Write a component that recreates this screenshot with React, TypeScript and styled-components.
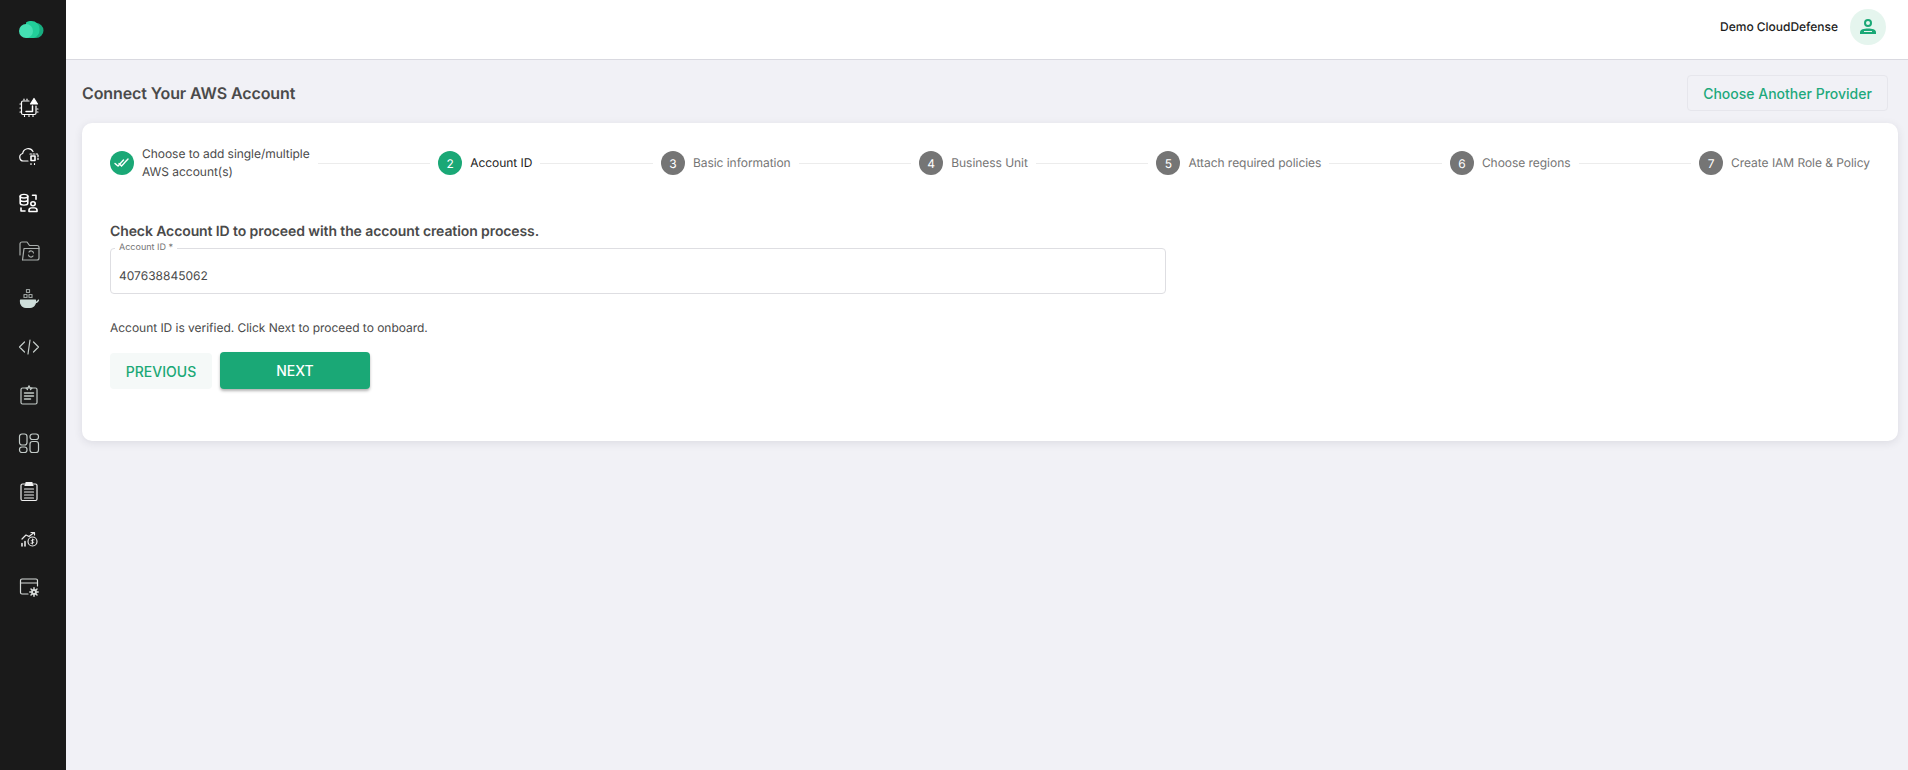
import React from 'react'
import styled, { createGlobalStyle } from 'styled-components'

const GlobalStyle = createGlobalStyle`
  html, body {
    margin: 0;
    padding: 0;
    height: 100%;
    background: #f1f1f6;
    font-family: Inter, "Liberation Sans", sans-serif;
    text-rendering: geometricPrecision;
  }
  * { box-sizing: border-box; }
`

const Page = styled.div`
  display: flex;
  width: 1908px;
  height: 770px;
  overflow: hidden;
`

const Sidebar = styled.aside`
  width: 66px;
  flex: none;
  background: #1a1a1a;
  display: flex;
  flex-direction: column;
  align-items: center;
  padding-right: 9px;
`

const Logo = styled.div`
  height: 59px;
  width: 100%;
  padding-left: 4px;
  display: flex;
  align-items: center;
  justify-content: center;
  margin-bottom: 24px;
`

const NavItem = styled.div<{ $tone: string }>`
  height: 48px;
  width: 100%;
  display: flex;
  align-items: center;
  justify-content: center;
  color: ${({ $tone }) => $tone};
`

const Main = styled.main`
  flex: 1;
  min-width: 0;
  display: flex;
  flex-direction: column;
`

const Header = styled.header`
  height: 60px;
  flex: none;
  background: #fff;
  border-bottom: 1px solid #d9d9e0;
  display: flex;
  align-items: center;
  justify-content: flex-end;
  padding: 0 22px 6px 0;
  gap: 12px;
`

const UserName = styled.span`
  font-size: 12px;
  font-weight: 500;
  letter-spacing: -0.02px;
  color: #1c1c1c;
`

const Avatar = styled.div`
  width: 36px;
  height: 36px;
  border-radius: 50%;
  background: #e5f5ee;
  display: flex;
  align-items: center;
  justify-content: center;
`

const Content = styled.div`
  padding: 15px 10px 0 16px;
`

const TitleRow = styled.div`
  display: flex;
  align-items: center;
  justify-content: space-between;
  height: 36px;
  padding-right: 10px;
  margin-bottom: 12px;
`

const Title = styled.h1`
  margin: 0;
  font-size: 16px;
  font-weight: 600;
  letter-spacing: -0.1px;
  color: #4a4a4a;
`

const ProviderButton = styled.button`
  height: 36px;
  width: 201px;
  border: 1px solid #e6e6ec;
  border-radius: 4px;
  background: transparent;
  color: #1ea97c;
  font: 500 14px Inter, sans-serif;
`

const Card = styled.section`
  height: 318px;
  background: #fff;
  border-radius: 10px;
  padding: 20px 28px 0;
  box-shadow: 0 2px 8px rgba(40, 40, 60, 0.1);
`

const Stepper = styled.div`
  display: flex;
  align-items: center;
  height: 40px;
`

const Step = styled.div`
  display: flex;
  align-items: center;
  gap: 8px;
  flex: none;
`

const StepCircle = styled.div<{ $active?: boolean }>`
  width: 24px;
  height: 24px;
  border-radius: 50%;
  flex: none;
  background: ${({ $active }) => ($active ? '#1aa876' : '#757575')};
  color: #fff;
  font-size: 12px;
  display: flex;
  align-items: center;
  justify-content: center;
`

const StepLabel = styled.span<{ $state: 'done' | 'active' | 'idle' }>`
  font-size: 12px;
  line-height: 18px;
  letter-spacing: -0.04px;
  color: ${({ $state }) =>
    $state === 'active' ? '#1c1c1c' : $state === 'done' ? '#4a4a4a' : '#757575'};
  font-weight: 400;
`

const Connector = styled.div`
  flex: 1;
  height: 1px;
  background: #ececec;
  margin: 0 8px;
`

const Heading = styled.h2`
  margin: 39px 0 0;
  font-size: 14px;
  line-height: 20px;
  font-weight: 600;
  letter-spacing: -0.1px;
  color: #4a4a4a;
`

const Field = styled.fieldset`
  margin: 1px 0 0;
  padding: 0 8px;
  width: 1056px;
  height: 51px;
  border: 1px solid #dedee2;
  border-radius: 4px;
`

const FieldLegend = styled.legend`
  font-size: 9px;
  line-height: 10px;
  color: #757575;
  padding: 0 4px;
  margin-left: -4px;
`

const FieldValue = styled.div`
  font-size: 12px;
  line-height: 20px;
  color: #4a4a4a;
  padding-top: 13px;
`

const Hint = styled.p`
  margin: 24px 0 0;
  font-size: 12px;
  line-height: 20px;
  letter-spacing: -0.03px;
  color: #4a4a4a;
`

const Actions = styled.div`
  display: flex;
  gap: 8px;
  margin-top: 14px;
`

const GhostButton = styled.button`
  width: 102px;
  height: 36px;
  margin-top: 1px;
  border: none;
  border-radius: 4px;
  background: #f5f9f8;
  color: #1aa876;
  font: 500 14px Inter, sans-serif;
`

const PrimaryButton = styled.button`
  width: 150px;
  height: 37px;
  border: none;
  border-radius: 4px;
  background: #1aa876;
  color: #fff;
  font: 500 14px Inter, sans-serif;
  box-shadow: 0 2px 3px rgba(0, 0, 0, 0.3);
`

const Icon: React.FC<{ children: React.ReactNode }> = ({ children }) => (
  <svg width="22" height="22" viewBox="0 0 22 22" fill="none" stroke="currentColor" strokeWidth="1.2" strokeLinecap="round" strokeLinejoin="round">
    {children}
  </svg>
)

const navIcons: { tone: string; icon: React.ReactNode }[] = [
  {
    tone: '#ffffff',
    icon: (
      <Icon>
        <path d="M11 5H5a1.500 1.500 0 0 0-1.500 1.500V17A1.500 1.500 0 0 0 5 18.500h11.500A1.500 1.500 0 0 0 18 17V10" />
        <path d="M6 3v1M9 3v1M2 8h1M2 12h1M2 16h1M6.500 19.500v1M11 19.500v1M15 19.500v1M19 13h1M19 16h1" />
        <path d="M14.500 10v5.500H8" strokeWidth="1.500" />
        <path d="M12.500 8l3.500-5.500L19.500 8z" fill="currentColor" />
      </Icon>
    ),
  },
  {
    tone: '#ffffff',
    icon: (
      <Icon>
        <path d="M10 17H5.500a3.800 3.800 0 0 1-.8-7.500A5.500 5.500 0 0 1 15 7.500" />
        <rect x="13" y="12" width="4" height="4.500" strokeWidth="1.600" />
        <path d="M12 10h8v7M13 19.500v1M16.500 19.500v1" strokeDasharray="1.500 1.500" />
      </Icon>
    ),
  },
  {
    tone: '#ffffff',
    icon: (
      <Icon>
        <g transform="translate(0 1) scale(1 .9)">
          <ellipse cx="6" cy="3.500" rx="3.800" ry="2" strokeWidth="1.600" />
          <path d="M2.200 3.500v8c0 1.100 1.700 2 3.800 2s3.800-.9 3.800-2v-8M2.200 7.500c0 1.100 1.700 2 3.800 2s3.800-.9 3.800-2" strokeWidth="1.600" />
          <path d="M14.500 2.500h3.500V7M3 16.500v3.500h4" strokeWidth="1.600" />
          <circle cx="15" cy="12" r="2.200" strokeWidth="1.600" />
          <path d="M11 20.500V19a2.500 2.500 0 0 1 2.500-2.500h3A2.500 2.500 0 0 1 19 19v1.500z" strokeWidth="1.600" />
        </g>
      </Icon>
    ),
  },
  {
    tone: '#a8adab',
    icon: (
      <Icon>
        <path d="M2 15V4a2 2 0 0 1 2-2h5l2.500 3.500H19a2 2 0 0 1 2 2V18a2 2 0 0 1-2 2H5" />
        <path d="M6 8.500h15M6 8.500l-1.500 11.500" />
        <path d="M15.500 13a2.500 2.500 0 0 0-4.500-1M10.500 15a2.500 2.500 0 0 0 4.500 1" />
      </Icon>
    ),
  },
  {
    tone: '#cfdfdb',
    icon: (
      <Icon>
        <path d="M8.500 1.500h3v3h-3zM6 6.500h3v3H6zM11 6.500h3v3h-3z" stroke="#9aa09e" />
        <path d="M2.500 12h15v2a5.500 5.500 0 0 1-5.500 5.500H8A5.500 5.500 0 0 1 2.500 14z" fill="currentColor" />
        <path d="M17 14.500c2 0 3-1 3.500-2.500" />
      </Icon>
    ),
  },
  {
    tone: '#c3cbc8',
    icon: (
      <Icon>
        <path d="M6.500 6l-5 5 5 5M15.500 6l5 5-5 5M12 4l-2 14" />
      </Icon>
    ),
  },
  {
    tone: '#c3cbc8',
    icon: (
      <Icon>
        <rect x="3" y="4" width="16" height="16" rx="1.500" />
        <path d="M6.500 9h9M6.500 12h9M6.500 15h6" strokeWidth="1.500" />
        <path d="M11 1.800l1 2 2 .3-1.500 1.400M11 1.800l-1 2-2 .3 1.500 1.400" />
      </Icon>
    ),
  },
  {
    tone: '#c3cbc8',
    icon: (
      <Icon>
        <rect x="1.500" y="2" width="7.500" height="11" rx="2.500" />
        <rect x="1.500" y="15" width="7.500" height="5.500" rx="2.500" />
        <rect x="12" y="2" width="8.500" height="5.500" rx="2.500" />
        <rect x="12" y="9.500" width="8.500" height="11" rx="2.500" />
      </Icon>
    ),
  },
  {
    tone: '#f0f0f0',
    icon: (
      <Icon>
        <rect x="3" y="4" width="16" height="16.500" rx="1.500" />
        <path d="M8 4V2.500h6V4l1 1.500H7z" fill="currentColor" />
        <path d="M6.500 9h9M6.500 12h9M6.500 15h9M6.500 18h9" />
      </Icon>
    ),
  },
  {
    tone: '#e8e8e8',
    icon: (
      <Icon>
        <circle cx="14.500" cy="13.500" r="4.500" />
        <path d="M14.500 11v5M16 11.800h-2a1 1 0 0 0 0 1.700h1a1 1 0 0 1 0 1.700h-2" strokeWidth="1" />
        <path d="M4 18v-2.500M7 18v-4.500" strokeWidth="1.600" />
        <path d="M4 11l4-4 3 1.500L15.500 5M13 4.500h3.500V7" />
      </Icon>
    ),
  },
  {
    tone: '#d8dcda',
    icon: (
      <Icon>
        <path d="M10 18H4a1.500 1.500 0 0 1-1.500-1.500V4.500A1.500 1.500 0 0 1 4 3h14a1.500 1.500 0 0 1 1.500 1.500V10" />
        <path d="M2.500 7h17" />
        <circle cx="16" cy="16" r="2" strokeWidth="1.800" />
        <path d="M16 11.800v1.500M16 18.700v1.500M11.800 16h1.500M18.700 16h1.500M13 13l1 1M18 18l1 1M13 19l1-1M18 14l1-1" strokeWidth="1.500" />
      </Icon>
    ),
  },
]

const steps = [
  { n: 2, label: 'Account ID', state: 'active' as const },
  { n: 3, label: 'Basic information', state: 'idle' as const },
  { n: 4, label: 'Business Unit', state: 'idle' as const },
  { n: 5, label: 'Attach required policies', state: 'idle' as const },
  { n: 6, label: 'Choose regions', state: 'idle' as const },
  { n: 7, label: 'Create IAM Role & Policy', state: 'idle' as const },
]

const App: React.FC = () => {
  return (
    <Page>
      <GlobalStyle />
      <Sidebar>
        <Logo>
          <svg width="26" height="18" viewBox="0 0 26 18">
            <path d="M18 2a7.500 7.500 0 0 1 0 15H12V2z" fill="#18ad80" />
            <path d="M13.500 0a8 8 0 0 1 8 8 9 9 0 0 1-6 9H8V1.500A8 8 0 0 1 13.500 0z" fill="#22cf9a" />
            <circle cx="8" cy="10" r="7" fill="#45e0b3" />
          </svg>
        </Logo>
        {navIcons.map((item, i) => (
          <NavItem key={i} $tone={item.tone}>
            {item.icon}
          </NavItem>
        ))}
      </Sidebar>
      <Main>
        <Header>
          <UserName>Demo CloudDefense</UserName>
          <Avatar>
            <svg width="20" height="20" viewBox="0 0 20 20" fill="none">
              <circle cx="10" cy="6" r="3" stroke="#1aa876" strokeWidth="2" />
              <path d="M2 15c0-2.500 4-3.500 8-3.500s8 1 8 3.500v2H2z" fill="#1aa876" />
              <path d="M6 14.500h8" stroke="#e5f5ee" strokeWidth="1" />
            </svg>
          </Avatar>
        </Header>
        <Content>
          <TitleRow>
            <Title>Connect Your AWS Account</Title>
            <ProviderButton>Choose Another Provider</ProviderButton>
          </TitleRow>
          <Card>
            <Stepper>
              <Step>
                <StepCircle $active>
                  <svg width="16" height="16" viewBox="0 0 16 16" fill="none" stroke="#fff" strokeWidth="1.400" strokeLinecap="round">
                    <path d="M1 8.500l3 2.500 5.500-6M5 8.500l2.500 2.500 6.500-7" strokeDasharray="2.500 0.700" />
                  </svg>
                </StepCircle>
                <StepLabel $state="done">
                  Choose to add single/multiple
                  <br />
                  AWS account(s)
                </StepLabel>
              </Step>
              {steps.map((step) => (
                <React.Fragment key={step.n}>
                  <Connector />
                  <Step>
                    <StepCircle $active={step.state === 'active'}>{step.n}</StepCircle>
                    <StepLabel $state={step.state}>{step.label}</StepLabel>
                  </Step>
                </React.Fragment>
              ))}
            </Stepper>
            <Heading>Check Account ID to proceed with the account creation process.</Heading>
            <Field>
              <FieldLegend>Account ID *</FieldLegend>
              <FieldValue>407638845062</FieldValue>
            </Field>
            <Hint>Account ID is verified. Click Next to proceed to onboard.</Hint>
            <Actions>
              <GhostButton>PREVIOUS</GhostButton>
              <PrimaryButton>NEXT</PrimaryButton>
            </Actions>
          </Card>
        </Content>
      </Main>
    </Page>
  )
}

export default App
